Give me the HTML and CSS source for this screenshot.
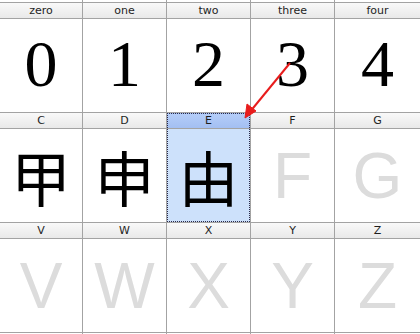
FILE: index.html
```html
<!DOCTYPE html>
<html lang="en">
<head>
  <meta charset="UTF-8">
  <title>Glyph grid</title>
  <link rel="stylesheet" href="styles.css">
</head>
<body>
  <div class="sheet">
    <div class="edge"></div><div class="edge"></div><div class="edge"></div><div class="edge"></div><div class="edge"></div>

    <div class="head">zero</div>
    <div class="head">one</div>
    <div class="head">two</div>
    <div class="head">three</div>
    <div class="head">four</div>
    <div class="cell digit">0</div>
    <div class="cell digit">1</div>
    <div class="cell digit">2</div>
    <div class="cell digit">3</div>
    <div class="cell digit">4</div>

    <div class="head">C</div>
    <div class="head">D</div>
    <div class="head selected">E</div>
    <div class="head">F</div>
    <div class="head">G</div>
    <div class="cell cjk">甲</div>
    <div class="cell cjk">申</div>
    <div class="cell cjk selected">由</div>
    <div class="cell empty">F</div>
    <div class="cell empty">G</div>

    <div class="head">V</div>
    <div class="head">W</div>
    <div class="head">X</div>
    <div class="head">Y</div>
    <div class="head">Z</div>
    <div class="cell empty">V</div>
    <div class="cell empty">W</div>
    <div class="cell empty">X</div>
    <div class="cell empty">Y</div>
    <div class="cell empty">Z</div>

    <div class="edge"></div><div class="edge"></div><div class="edge"></div><div class="edge"></div><div class="edge"></div>
  </div>

  <!-- pointer drawn over the grid -->
  <svg class="arrow" width="420" height="334" viewBox="0 0 420 334">
    <line x1="290" y1="63" x2="249" y2="113" stroke="#e81c1c" stroke-width="2"/>
    <path d="M245 118 L247 104 L256 111 Z" fill="#e81c1c" stroke="#e81c1c" stroke-width="1" stroke-linejoin="round"/>
  </svg>
</body>
</html>
```

FILE: styles.css
```css
body {
  margin: 0;
  background: #fff;
  position: relative;
  overflow: hidden;
}
.sheet {
  display: grid;
  grid-template-columns: 82px 83px 83px 83px 1fr;
  grid-template-rows: 2px 15px 93px 15px 93px 15px 93px 1fr;
  gap: 1px;
  width: 420px;
  height: 334px;
  background: #a3a3a3;
}
.edge {
  background: #fff;
}
.head {
  background: linear-gradient(#f9f9f9, #e9e9e9);
  font-family: "DejaVu Sans", sans-serif;
  font-size: 11px;
  line-height: 15px;
  color: #1e1e1e;
  text-align: center;
}
.cell {
  background: #fff;
  display: flex;
  align-items: center;
  justify-content: center;
}
.digit {
  font-family: "Liberation Serif", serif;
  font-size: 66px;
  color: #000;
  padding-bottom: 4px;
}
.cjk {
  font-family: "Noto Sans CJK SC", sans-serif;
  font-size: 60px;
  color: #000;
}
.empty {
  font-family: "Liberation Sans", Arial, sans-serif;
  font-size: 64px;
  color: #dcdcdc;
}
.head.selected {
  background: linear-gradient(#b4cdf8, #a3bff2);
  border: 1px dotted #2a2a4a;
  border-bottom: none;
  line-height: 14px;
}
.cell.selected {
  background: #cde1fb;
  border: 1px dotted #2a2a4a;
  border-top: none;
}
.arrow {
  position: absolute;
  left: 0;
  top: 0;
}
```
